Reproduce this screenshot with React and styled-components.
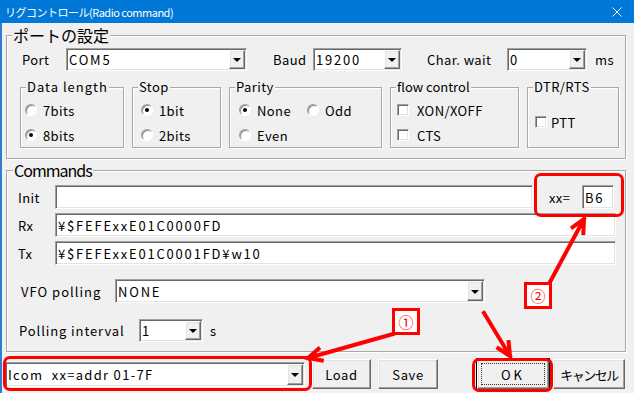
import styled, { createGlobalStyle } from 'styled-components'

const font = '"Noto Sans CJK JP", "Liberation Sans", sans-serif'

const GlobalStyle = createGlobalStyle`
  html, body {
    margin: 0;
    padding: 0;
    background: #f0f0f0;
  }
  body {
    font-family: ${font};
    font-size: 13px;
    color: #000;
  }
`

const Window = styled.div`
  position: relative;
  width: 634px;
  height: 393px;
  overflow: hidden;
  display: flex;
  flex-direction: column;
  background: #f0f0f0;
`

const TitleBar = styled.div`
  height: 23px;
  flex: none;
  background: #0078d7;
  color: #fff;
  display: flex;
  align-items: center;
  justify-content: space-between;
  padding: 0 12px 0 5px;
  font-size: 11px;
  letter-spacing: -0.5px;
`

const Body = styled.div`
  flex: 1;
  border-left: 2px solid #2f7fd0;
  padding: 4px 0 0 4px;
  display: flex;
  flex-direction: column;
`

const Group = styled.fieldset`
  margin: ${p => p.$mt || 0}px 0 0 0;
  padding: 0;
  width: ${p => p.$w}px;
  flex: none;
  box-sizing: border-box;
  border: 1px solid #a8a8a8;
  box-shadow: inset 1px 1px #fff, 1px 1px #fff;
  min-width: 0;
`

const Legend = styled.legend`
  margin-left: ${p => p.$ml || 5}px;
  padding: 0 1px;
  font-size: ${p => p.$size || 13}px;
  line-height: ${p => p.$size || 14}px;
  letter-spacing: ${p => (p.$ls !== undefined ? p.$ls : 0.4)}px;
  background: #f0f0f0;
  position: relative;
`

const Row = styled.div`
  display: flex;
  align-items: center;
  height: ${p => p.$h || 24}px;
  margin-top: ${p => p.$mt || 0}px;
  padding-left: ${p => p.$pl || 0}px;
`

const Label = styled.span`
  flex: none;
  width: ${p => (p.$w ? `${p.$w}px` : 'auto')};
  margin-left: ${p => p.$ml || 0}px;
  white-space: nowrap;
  letter-spacing: ${p => p.$ls || 0.4}px;
`

const sunken = `
  border: 1px solid;
  border-color: #a0a0a0 #fff #fff #a0a0a0;
  box-shadow: inset 1px 1px #696969, inset -1px -1px #e3e3e3;
`

const raised = `
  border: 1px solid;
  border-color: #fff #696969 #696969 #fff;
  box-shadow: inset -1px -1px #a0a0a0, inset 1px 1px #e3e3e3;
  background: #f0f0f0;
`

const Combo = styled.div`
  flex: none;
  width: ${p => p.$w}px;
  height: ${p => p.$h || 23}px;
  box-sizing: border-box;
  display: flex;
  align-items: stretch;
  background: #fff;
  ${sunken}
  padding: 1px;
`

const FieldText = styled.span`
  flex: 1;
  display: flex;
  align-items: center;
  padding-left: 1px;
  overflow: hidden;
  white-space: nowrap;
  letter-spacing: ${p => p.$ls || 1.8}px;
`

const DropButton = styled.span`
  flex: none;
  width: 16px;
  box-sizing: border-box;
  ${raised}
  display: flex;
  align-items: center;
  justify-content: center;
  &::after {
    content: '';
    border-left: 4px solid transparent;
    border-right: 4px solid transparent;
    border-top: 4px solid #000;
    margin-top: 1px;
  }
`

const Field = styled.div`
  flex: ${p => (p.$w ? 'none' : 1)};
  width: ${p => (p.$w ? `${p.$w}px` : 'auto')};
  margin-right: ${p => p.$mr || 0}px;
  height: 24px;
  box-sizing: border-box;
  background: #fff;
  ${sunken}
  padding: 0 2px;
  display: flex;
  align-items: center;
  white-space: nowrap;
  letter-spacing: 1.8px;
`

const SubRow = styled.div`
  display: flex;
  align-items: flex-start;
  gap: 8px;
  margin-top: 9px;
  padding: 0 0 10px 13px;
`

const SubBody = styled.div`
  display: ${p => (p.$grid ? 'grid' : 'flex')};
  flex-direction: column;
  grid-template-columns: 68px auto;
  grid-auto-rows: 18px;
  row-gap: 7px;
  height: 53px;
  box-sizing: border-box;
  padding: ${p => p.$pt || 7}px 0 3px ${p => p.$pl}px;
  align-content: start;
`

const Option = styled.label`
  display: flex;
  align-items: center;
  gap: ${p => p.$gap || 6}px;
  height: 18px;
  flex: none;
  white-space: nowrap;
  letter-spacing: 0.4px;
`

const RadioDot = styled.span`
  flex: none;
  width: 12px;
  height: 12px;
  box-sizing: border-box;
  border-radius: 50%;
  background: #fff;
  border: 1px solid;
  border-color: #a0a0a0 #fff #fff #a0a0a0;
  box-shadow: inset 1px 1px #8c8c8c;
  display: flex;
  align-items: center;
  justify-content: center;
  &::after {
    content: '';
    width: 4px;
    height: 4px;
    border-radius: 50%;
    background: ${p => (p.$on ? '#000' : 'transparent')};
  }
`

const Check = styled.span`
  flex: none;
  width: 12px;
  height: 12px;
  box-sizing: border-box;
  background: #fff;
  ${sunken}
`

const CmdBody = styled.div`
  padding: 7px 9px 9px 11px;
  display: flex;
  flex-direction: column;
  gap: 4px;
`

const BottomRow = styled.div`
  display: flex;
  align-items: center;
  height: 30px;
  margin: 7px 0 0 -1px;
`

const Button = styled.div`
  position: relative;
  flex: none;
  width: ${p => p.$w}px;
  height: 30px;
  margin-left: ${p => p.$ml || 0}px;
  box-sizing: border-box;
  display: flex;
  align-items: center;
  justify-content: center;
  letter-spacing: ${p => (p.$ls !== undefined ? p.$ls : 0.6)}px;
  ${raised}
  ${p =>
    p.$default &&
    `
    outline: 1px solid #000;
    outline-offset: 0;
    &::after {
      content: '';
      position: absolute;
      inset: 3px;
      border: 1px dotted #333;
    }
  `}
`

const Overlay = styled.div`
  position: absolute;
  inset: 0;
  pointer-events: none;
`

const Highlight = styled.div`
  position: absolute;
  left: ${p => p.$x}px;
  top: ${p => p.$y}px;
  width: ${p => p.$w}px;
  height: ${p => p.$h}px;
  box-sizing: border-box;
  border: 3px solid #ff0000;
  border-radius: 7px;
`

const Badge = styled.div`
  position: absolute;
  left: ${p => p.$x}px;
  top: ${p => p.$y}px;
  width: 28px;
  height: 27px;
  box-sizing: border-box;
  border: 3px solid #ff0000;
  background: #fff;
  color: #ff0000;
  font-size: 15px;
  display: flex;
  align-items: center;
  justify-content: center;
`

const ArrowLayer = styled.svg`
  position: absolute;
  left: 0;
  top: 0;
`

const arrowPath = (x1, y1, x2, y2, len = 14, ang = 0.45) => {
  const a = Math.atan2(y1 - y2, x1 - x2)
  const w1 = [x2 + len * Math.cos(a + ang), y2 + len * Math.sin(a + ang)]
  const w2 = [x2 + len * Math.cos(a - ang), y2 + len * Math.sin(a - ang)]
  return `M${x1} ${y1}L${x2} ${y2}M${w1[0]} ${w1[1]}L${x2} ${y2}L${w2[0]} ${w2[1]}`
}

const Radio = ({ on, children }) => (
  <Option>
    <RadioDot $on={on} />
    {children}
  </Option>
)

const CheckOpt = ({ gap, children }) => (
  <Option $gap={gap}>
    <Check />
    {children}
  </Option>
)

const Select = ({ w, h, ls, children }) => (
  <Combo $w={w} $h={h}>
    <FieldText $ls={ls}>{children}</FieldText>
    <DropButton />
  </Combo>
)

const App = () => {
  return (
    <Window>
      <GlobalStyle />
      <TitleBar>
        <span>リグコントロール(Radio command)</span>
        <svg width="10" height="10" viewBox="0 0 10 10">
          <path d="M0.5 0.5L9.5 9.5M9.5 0.5L0.5 9.5" stroke="#fff" strokeWidth="1" />
        </svg>
      </TitleBar>

      <Body>
        <Group $w={620}>
          <Legend $size={16} $ls={0}>ポートの設定</Legend>
          <Row $h={23} $mt={5} $pl={15}>
            <Label $w={44}>Port</Label>
            <Select w={181}>COM5</Select>
            <Label $w={40} $ml={26}>Baud</Label>
            <Select w={89}>19200</Select>
            <Label $w={80} $ml={25}>Char. wait</Label>
            <Select w={80}>0</Select>
            <Label $ml={8}>ms</Label>
          </Row>

          <SubRow>
            <Group $w={104}>
              <Legend $ls={1}>Data length</Legend>
              <SubBody $pl={4}>
                <Radio>7bits</Radio>
                <Radio on>8bits</Radio>
              </SubBody>
            </Group>
            <Group $w={89}>
              <Legend>Stop</Legend>
              <SubBody $pl={8}>
                <Radio on>1bit</Radio>
                <Radio>2bits</Radio>
              </SubBody>
            </Group>
            <Group $w={153}>
              <Legend>Parity</Legend>
              <SubBody $pl={9} $grid>
                <Radio on>None</Radio>
                <Radio>Odd</Radio>
                <Radio>Even</Radio>
              </SubBody>
            </Group>
            <Group $w={129}>
              <Legend $ls={0}>flow control</Legend>
              <SubBody $pl={6}>
                <CheckOpt gap={8}>XON/XOFF</CheckOpt>
                <CheckOpt gap={8}>CTS</CheckOpt>
              </SubBody>
            </Group>
            <Group $w={92}>
              <Legend>DTR/RTS</Legend>
              <SubBody $pl={7} $pt={19}>
                <CheckOpt gap={4}>PTT</CheckOpt>
              </SubBody>
            </Group>
          </SubRow>
        </Group>

        <Group $w={620} $mt={3}>
          <Legend $size={16} $ml={6} $ls={-1}>Commands</Legend>
          <CmdBody>
            <Row>
              <Label $w={37}>Init</Label>
              <Field />
              <Label $w={33} $ml={16}>xx=</Label>
              <Field $w={32} $mr={2}>B6</Field>
            </Row>
            <Row>
              <Label $w={37}>Rx</Label>
              <Field>¥$FEFExxE01C0000FD</Field>
            </Row>
            <Row>
              <Label $w={37}>Tx</Label>
              <Field>¥$FEFExxE01C0001FD¥w10</Field>
            </Row>
            <Row $mt={10}>
              <Label $w={94} $ml={3} $ls={1}>VFO polling</Label>
              <Select w={370} h={24}>NONE</Select>
            </Row>
            <Row $mt={12} $h={23}>
              <Label $w={120} $ml={1} $ls={0.9}>Polling interval</Label>
              <Select w={64}>1</Select>
              <Label $ml={7}>s</Label>
            </Row>
          </CmdBody>
        </Group>

        <BottomRow>
          <Select w={300} h={25} ls={1.3}>Icom&nbsp;&nbsp;xx=addr 01-7F</Select>
          <Button $w={59} $ml={7}>Load</Button>
          <Button $w={60} $ml={7}>Save</Button>
          <Button $w={72} $ml={39} $default $ls={3}>OK</Button>
          <Button $w={72} $ml={4} $ls={-1.5}>キャンセル</Button>
        </BottomRow>
      </Body>

      <Overlay>
        <Highlight $x={534} $y={173} $w={90} $h={44} />
        <Highlight $x={3} $y={356} $w={309} $h={35} />
        <Highlight $x={472} $y={358} $w={81} $h={34} />
        <Badge $x={392} $y={308}>①</Badge>
        <Badge $x={524} $y={282}>②</Badge>
        <ArrowLayer width="634" height="393">
          <g stroke="#ff0000" strokeWidth="4" fill="none" strokeLinecap="square">
            <path d={arrowPath(393, 334, 308, 358)} />
            <path d={arrowPath(550, 282, 584, 219)} />
            <path d={arrowPath(484, 313, 510, 356)} />
          </g>
        </ArrowLayer>
      </Overlay>
    </Window>
  )
}

export default App
